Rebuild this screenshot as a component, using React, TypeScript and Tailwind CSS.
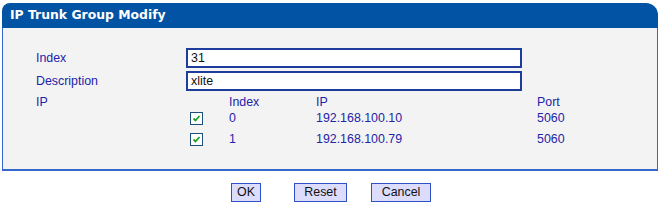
import React from "react";

const Check = () => (
  <span className="flex h-[13px] w-[13px] items-center justify-center border border-[#1c4f7c] bg-white">
    <svg width="9" height="9" viewBox="0 0 9 9">
      <path d="M1.5 4.5 L3.5 6.5 L7.5 2" fill="none" stroke="#22a022" strokeWidth="1.8" />
    </svg>
  </span>
);

export default function App() {
  const rows = [
    { idx: "0", ip: "192.168.100.10", port: "5060", mt: "mt-0" },
    { idx: "1", ip: "192.168.100.79", port: "5060", mt: "mt-[5px]" },
  ];
  return (
    <div className="w-[660px] h-[207px] bg-white pt-[3px] pl-[2px] text-[12.4px] text-[#2323a8]" style={{ fontFamily: '"Liberation Sans", Arial, sans-serif' }}>
      <div className="w-[656px]">
        <div
          className="flex h-[25px] items-center rounded-tl-[8px] rounded-tr-[12px] bg-[#0353a4] pl-[8px] text-[12.4px] font-bold text-white"
          style={{ fontFamily: '"DejaVu Sans", Verdana, sans-serif' }}
        >
          IP Trunk Group Modify
        </div>
        <div className="h-[143px] border-x border-b-2 border-[#3468cc] bg-[#f3f3f3] pl-[33px] pt-[20px]">
          <div className="flex h-[20px] items-center">
            <div className="w-[150px]">Index</div>
            <div className="flex h-[20px] w-[336px] items-center border-2 border-[#1e3c9c] bg-white pl-[3px] text-[#111]">31</div>
          </div>
          <div className="mt-[3px] flex h-[20px] items-center">
            <div className="w-[150px]">Description</div>
            <div className="flex h-[20px] w-[336px] items-center border-2 border-[#1e3c9c] bg-white pl-[3px] text-[#111]">xlite</div>
          </div>
          <div className="mt-[3px] flex h-[16px] items-center">
            <div className="w-[193px]">IP</div>
            <div className="w-[87px]">Index</div>
            <div className="w-[221px]">IP</div>
            <div>Port</div>
          </div>
          {rows.map((r) => (
            <div key={r.idx} className={`${r.mt} flex h-[16px] items-center`}>
              <div className="w-[154px]" />
              <div className="w-[39px]"><Check /></div>
              <div className="w-[87px]">{r.idx}</div>
              <div className="w-[221px]">{r.ip}</div>
              <div>{r.port}</div>
            </div>
          ))}
        </div>
      </div>
      <div className="mt-[12px] flex h-[19px] items-center text-[#111]">
        <div className="ml-[229px] flex h-[19px] w-[30px] items-center justify-center border border-[#3050c8] bg-[#dcdcfc]">OK</div>
        <div className="ml-[33px] flex h-[19px] w-[53px] items-center justify-center border border-[#3050c8] bg-[#dcdcfc]">Reset</div>
        <div className="ml-[24px] flex h-[19px] w-[60px] items-center justify-center border border-[#3050c8] bg-[#dcdcfc]">Cancel</div>
      </div>
    </div>
  );
}
